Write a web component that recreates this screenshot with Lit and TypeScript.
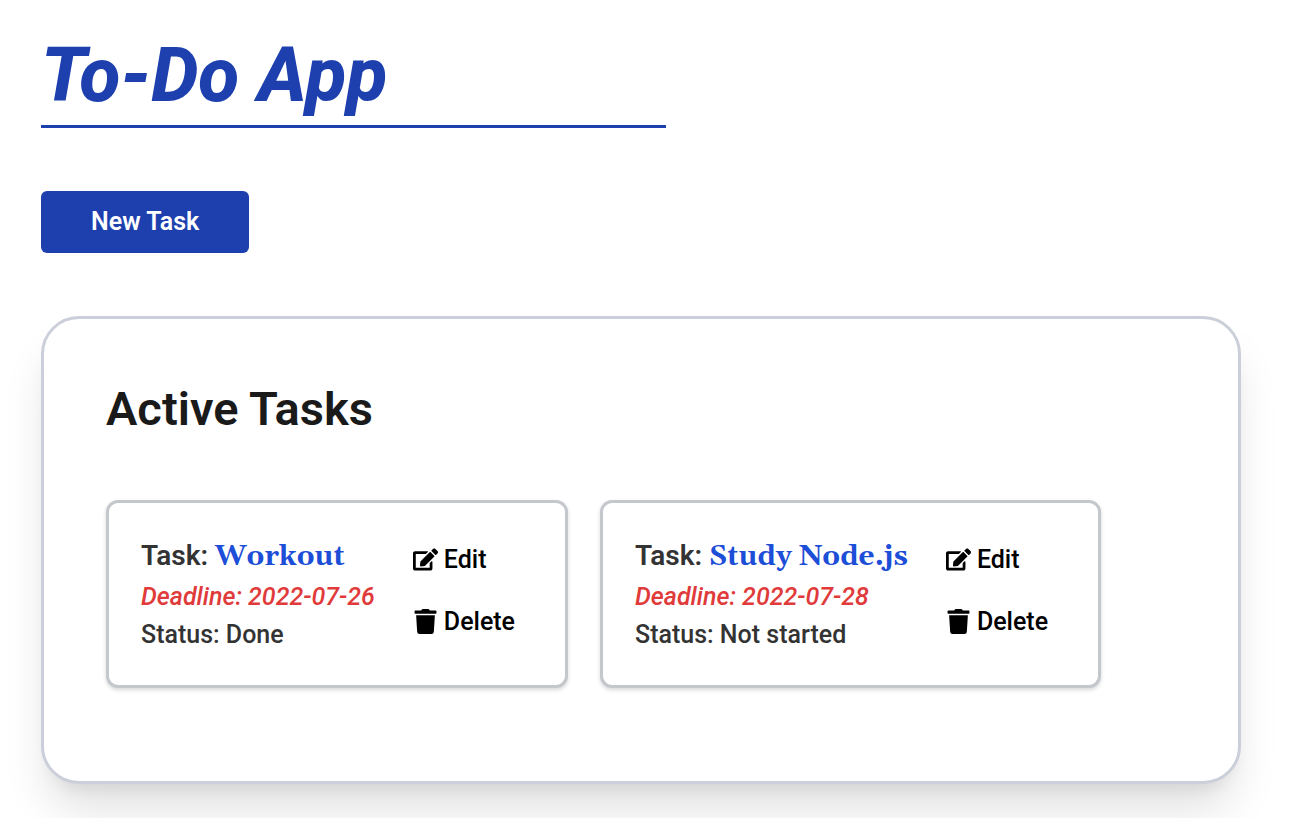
import { LitElement, html, css } from "lit";
import { customElement, property } from "lit/decorators.js";

interface Task {
  name: string;
  deadline: string;
  status: string;
}

const TASKS: Task[] = [
  { name: "Workout", deadline: "2022-07-26", status: "Done" },
  { name: "Study Node.js", deadline: "2022-07-28", status: "Not started" },
];

const editIcon = html`<svg viewBox="0 0 576 512" aria-hidden="true"><path d="M402.6 83.2l90.2 90.2c3.8 3.8 3.8 10 0 13.8L274.4 405.6l-92.8 10.3c-12.4 1.4-22.9-9.1-21.5-21.5l10.3-92.8L388.8 83.2c3.8-3.8 10-3.8 13.8 0zm162-22.9l-48.8-48.8c-15.2-15.2-39.9-15.2-55.2 0l-35.4 35.4c-3.8 3.8-3.8 10 0 13.8l90.2 90.2c3.8 3.8 10 3.8 13.8 0l35.4-35.4c15.2-15.3 15.2-40 0-55.2zM384 346.2V448H64V128h229.8c3.2 0 6.2-1.3 8.5-3.5l40-40c7.6-7.6 2.2-20.5-8.5-20.5H48C21.5 64 0 85.5 0 112v352c0 26.5 21.5 48 48 48h352c26.5 0 48-21.5 48-48V306.2c0-10.7-12.9-16-20.5-8.5l-40 40c-2.2 2.3-3.5 5.3-3.5 8.5z"/></svg>`;

const trashIcon = html`<svg viewBox="0 0 448 512" aria-hidden="true"><path d="M432 32H312l-9.4-18.7A24 24 0 0 0 281.1 0H166.8a23.72 23.72 0 0 0-21.4 13.3L136 32H16A16 16 0 0 0 0 48v32a16 16 0 0 0 16 16h416a16 16 0 0 0 16-16V48a16 16 0 0 0-16-16zM53.2 467a48 48 0 0 0 47.9 45h245.8a48 48 0 0 0 47.9-45L416 128H32z"/></svg>`;

@customElement("task-card")
export class TaskCard extends LitElement {
  @property({ attribute: false }) task!: Task;

  static styles = css`
    :host {
      display: block;
    }
    .card {
      box-sizing: border-box;
      display: flex;
      gap: 38px;
      padding: 32px 50px 31px 32px;
      border: 3px solid #c4c8cd;
      border-radius: 12px;
      background: #fff;
      box-shadow: 0 2px 5px rgb(0 0 0 / 0.1), 0 2px 3px rgb(0 0 0 / 0.06);
    }
    .details {
      color: #333;
      font-size: 25px;
      font-weight: 500;
      line-height: 38px;
    }
    .name {
      margin: 0;
      font-size: 28px;
      font-weight: 600;
      line-height: 42px;
    }
    .title {
      color: #1d4ed8;
      font-family: Georgia, Gelasio, "DejaVu Serif", serif;
      font-weight: 700;
    }
    .deadline,
    .status {
      margin: 0;
    }
    .deadline {
      color: #e03a3a;
      font-style: italic;
    }
    .actions {
      display: flex;
      flex-direction: column;
      gap: 24px;
      padding-top: 6px;
    }
    .action {
      display: flex;
      align-items: center;
      gap: 6px;
      padding: 0;
      border: 0;
      background: none;
      color: #000;
      font: 500 25px/38px Roboto, sans-serif;
      cursor: pointer;
    }
    svg {
      width: 25px;
      height: 25px;
      margin-bottom: 2px;
      fill: currentColor;
    }
  `;

  render() {
    const { name, deadline, status } = this.task;
    return html`
      <article class="card">
        <div class="details">
          <h3 class="name">Task: <span class="title">${name}</span></h3>
          <p class="deadline">Deadline: ${deadline}</p>
          <p class="status">Status: ${status}</p>
        </div>
        <div class="actions">
          <button class="action" type="button">${editIcon}<span>Edit</span></button>
          <button class="action" type="button">${trashIcon}<span>Delete</span></button>
        </div>
      </article>
    `;
  }
}

@customElement("app-root")
export class AppRoot extends LitElement {
  static styles = css`
    :host {
      display: block;
      overflow: hidden;
      padding: 25px 65px 34px 41px;
      background: #fff;
      font-family: Roboto, sans-serif;
    }
    .page {
      max-width: 1200px;
    }
    .heading {
      max-width: 625px;
      margin: 0 0 63px;
      border-bottom: 3px solid #1e40af;
      color: #1e40af;
      font-size: 75px;
      font-style: italic;
      font-weight: 800;
      line-height: 100px;
    }
    .new-task {
      display: block;
      padding: 12px 50px;
      border: 0;
      border-radius: 6px;
      background: #1e40af;
      color: #fff;
      font: 600 25px/38px Roboto, sans-serif;
      cursor: pointer;
    }
    .panel {
      margin-top: 63px;
      padding: 62px 62px 93px;
      border: 3px solid #cbcfd9;
      border-radius: 38px;
      background: #fff;
      box-shadow: 0 31px 45px -8px rgb(0 0 0 / 0.13), 0 12px 16px -9px rgb(0 0 0 / 0.08);
    }
    .subheading {
      margin: 0 0 63px;
      color: #1a1a1a;
      font-size: 47px;
      font-weight: 600;
      line-height: 56px;
    }
    .tasks {
      display: flex;
      flex-wrap: wrap;
      gap: 32px;
    }
  `;

  render() {
    return html`
      <main class="page">
        <h1 class="heading">To-Do App</h1>
        <button class="new-task" type="button">New Task</button>
        <section class="panel">
          <h2 class="subheading">Active Tasks</h2>
          <div class="tasks">
            ${TASKS.map((task) => html`<task-card .task=${task}></task-card>`)}
          </div>
        </section>
      </main>
    `;
  }
}
